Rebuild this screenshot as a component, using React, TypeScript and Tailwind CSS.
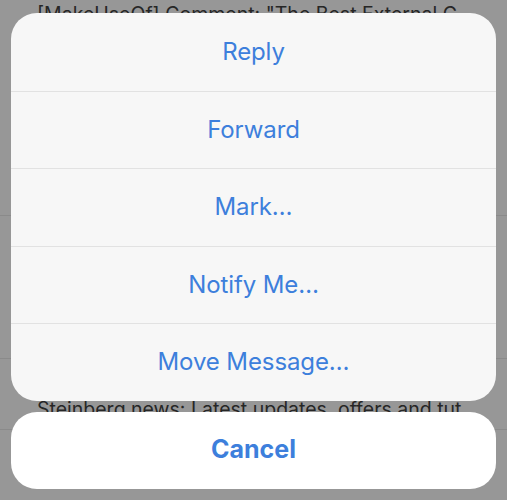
const actions = ["Reply", "Forward", "Mark…", "Notify Me…", "Move Message…"];

export default function App() {
  return (
    <div
      className="relative h-[500px] w-[507px] overflow-hidden bg-[#979797]"
      style={{ fontFamily: "Inter, 'Noto Sans', sans-serif" }}
    >
      {/* dimmed mail list behind the sheet */}
      <div className="flex flex-col text-[19.5px] leading-none text-[#262626]">
        <div className="pl-[37px] pt-[5px] whitespace-nowrap">[MakeUseOf] Comment: "The Best External G</div>
        <div className="mt-[190px] h-px bg-[#8a8a8a]" />
        <div className="mt-[142px] h-px bg-[#8a8a8a]" />
        <div className="mt-[41px] pl-[37px] whitespace-nowrap">Steinberg news: Latest updates, offers and tut</div>
        <div className="mt-[10px] h-px bg-[#8a8a8a]" />
      </div>

      {/* action sheet */}
      <div className="absolute left-[11px] right-[11px] top-[13px] flex flex-col gap-[11px]">
        <div className="flex flex-col overflow-hidden rounded-[26px] bg-[#f7f7f7]">
          {actions.map((a, i) => (
            <div
              key={a}
              className={`flex h-[77.5px] items-center justify-center text-[24px] tracking-[-0.1px] text-[#3d7fdc] ${
                i > 0 ? "border-t border-[#e2e2e2]" : ""
              }`}
            >
              {a}
            </div>
          ))}
        </div>
        <div className="flex h-[77px] items-center justify-center rounded-[26px] bg-white text-[25px] font-bold text-[#3d7fdc]">
          Cancel
        </div>
      </div>
    </div>
  );
}
